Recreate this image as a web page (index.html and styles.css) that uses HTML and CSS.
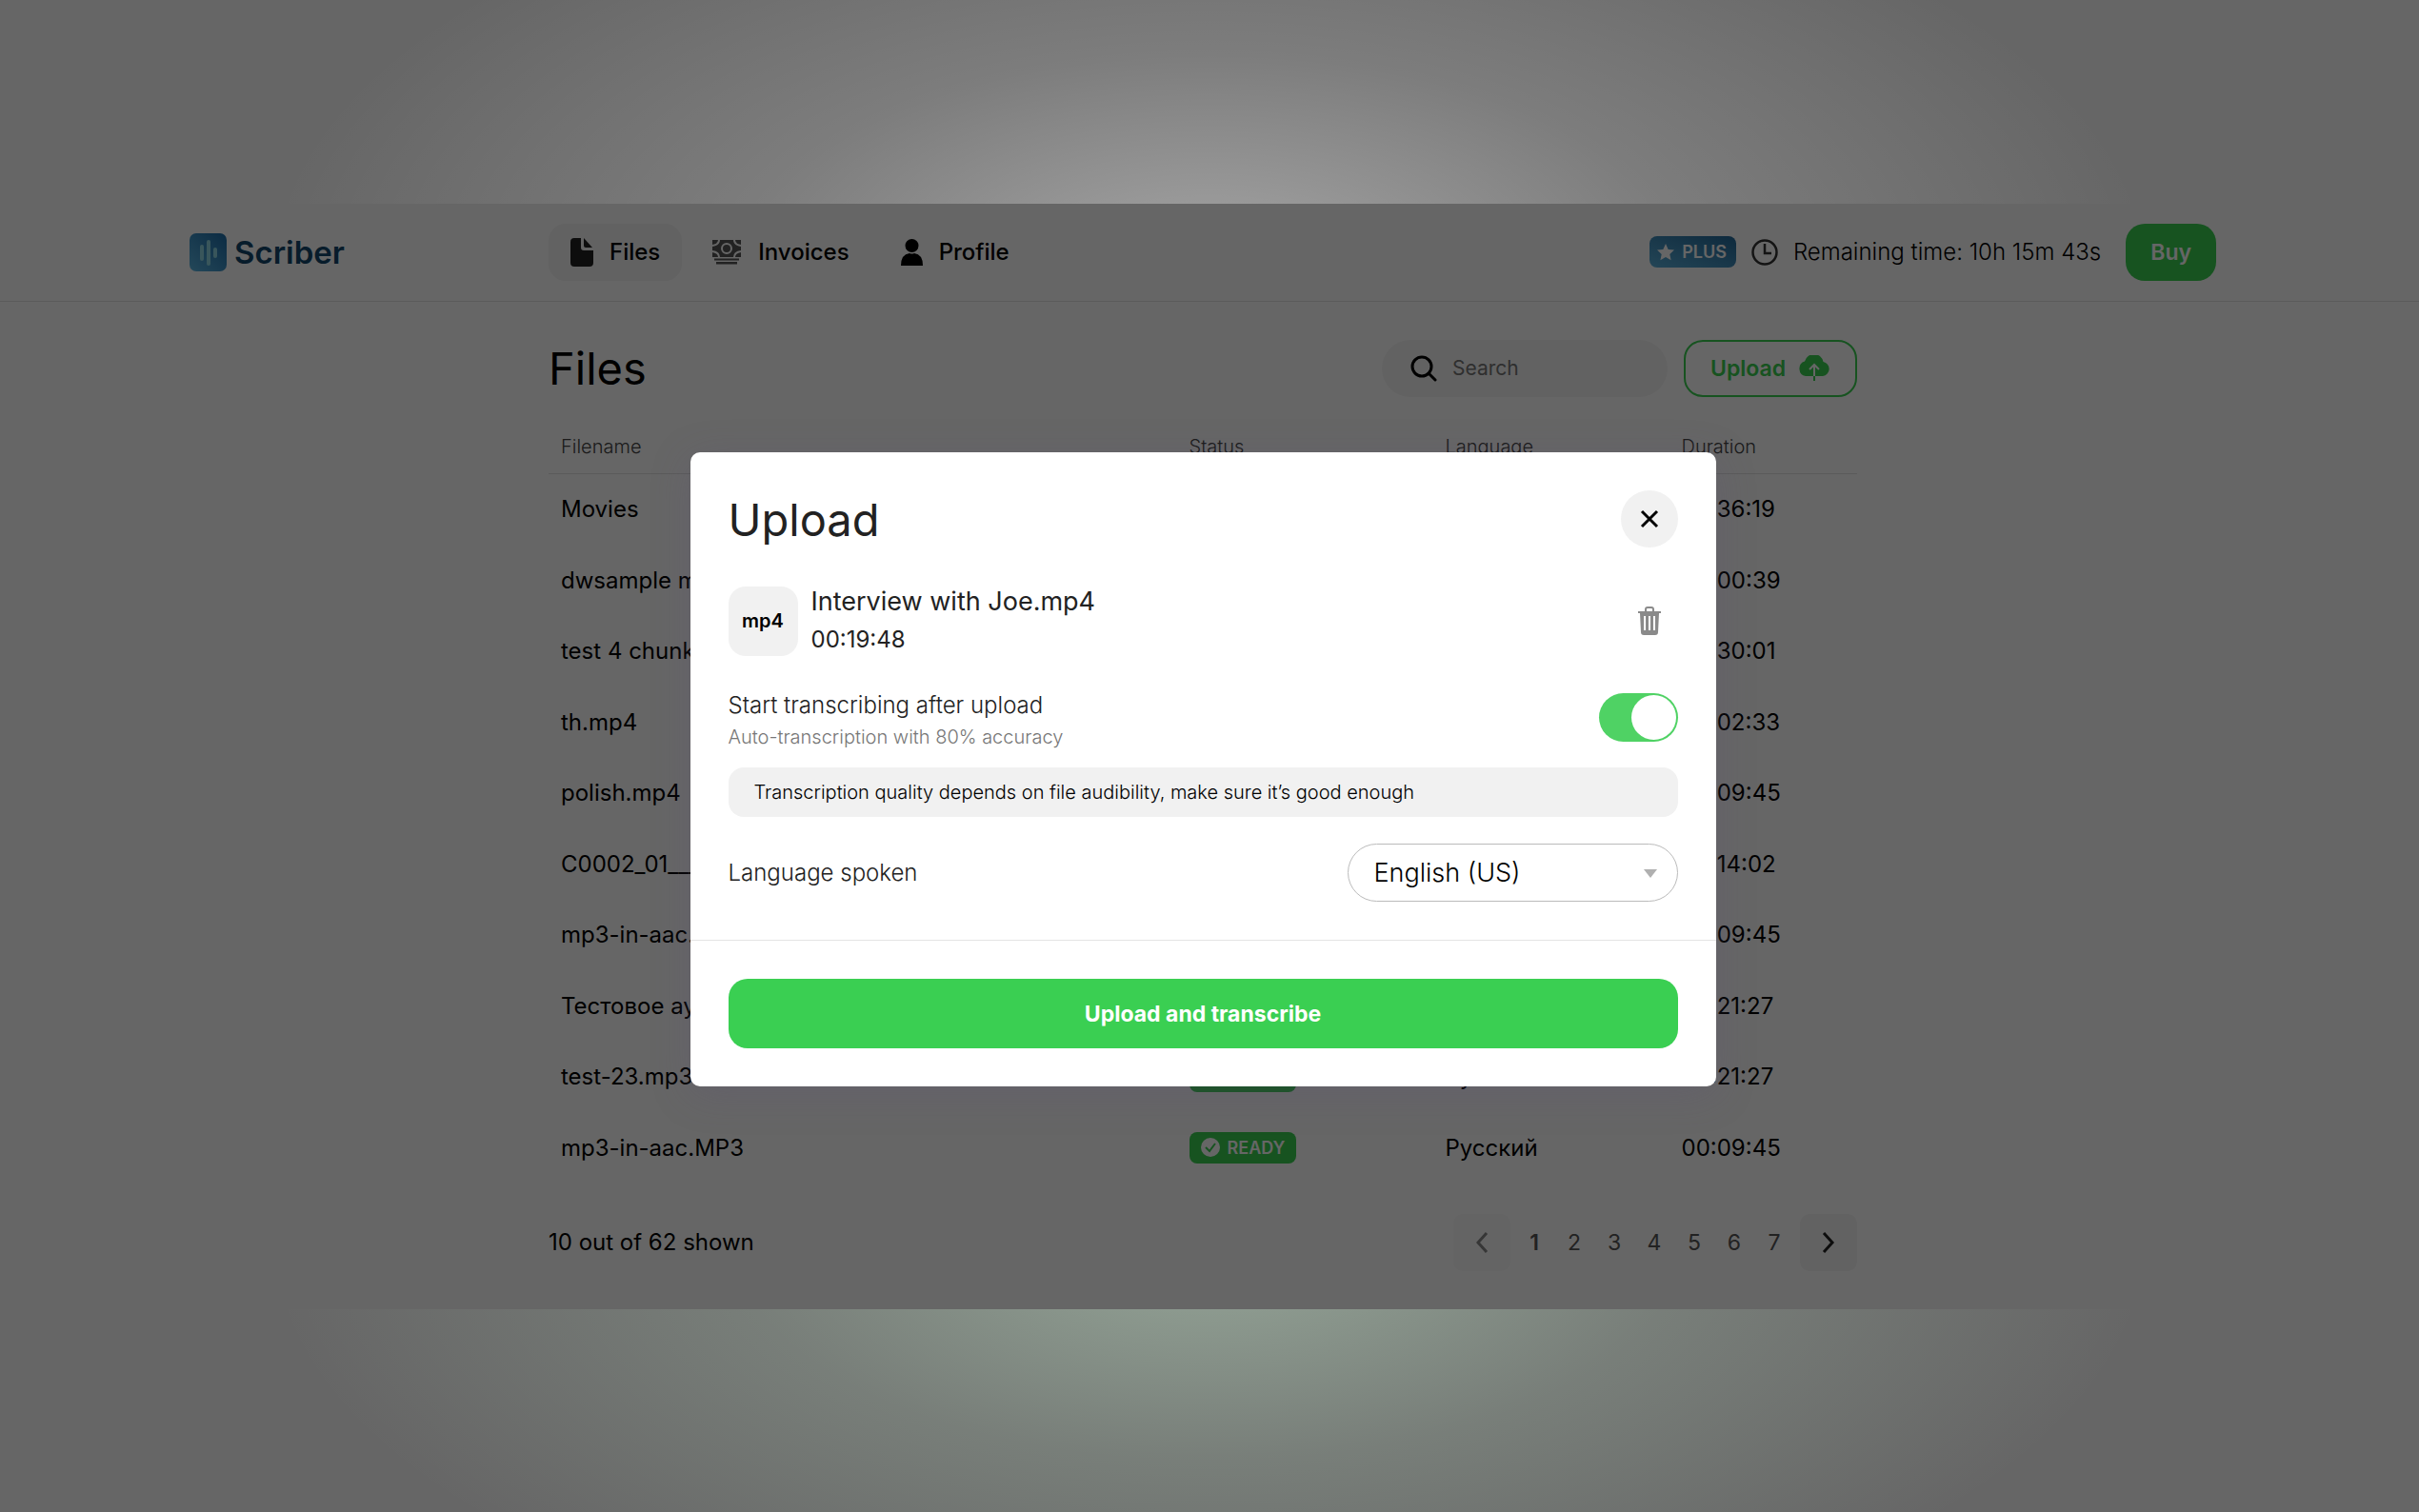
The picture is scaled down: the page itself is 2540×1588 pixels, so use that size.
FILE: index.html
```html
<!DOCTYPE html>
<html lang="en">
<head>
<meta charset="utf-8">
<title>Scriber - Files</title>
<link rel="stylesheet" href="styles.css">
</head>
<body>
<div class="app">
	<header class="header">
		<div class="header-inner">
			<a class="logo" href="#">
				<svg width="39" height="40" viewBox="0 0 39 40">
					<defs>
						<linearGradient id="logoFill" x1="0" y1="1" x2="1" y2="0">
							<stop offset="0" stop-color="#5ab4e0"/>
							<stop offset="1" stop-color="#1d6ba6"/>
						</linearGradient>
					</defs>
					<rect width="39" height="40" rx="7" fill="url(#logoFill)"/>
					<g stroke="#8fd8e4" stroke-width="4" stroke-linecap="round">
						<path d="M13 14v13M20 9v23M27 17v7"/>
					</g>
				</svg>
				<span>Scriber</span>
			</a>
			<nav class="nav">
				<a class="nav-item active" href="#files">
					<svg width="24" height="30" viewBox="0 0 24 30"><path fill="#222" d="M4 0h7v10q0 3 3 3h10v13q0 4-4 4H4q-4 0-4-4V4q0-4 4-4z"/><path fill="#222" d="M14 0l9 10h-7q-2 0-2-2z"/></svg>
					Files
				</a>
				<a class="nav-item" href="#invoices">
					<svg width="32" height="26" viewBox="0 0 32 26">
						<path fill="#555" d="M1 0h30v18H1z"/>
						<g fill="none" stroke="#fff" stroke-width="2">
							<circle cx="16" cy="9" r="5"/>
							<path d="M8 0q0 5-7 6M24 0q0 5 7 6M8 18q0-5-7-6M24 18q0-5 7-6"/>
						</g>
						<path fill="#555" d="M3 19.500h26v2H3zM5 23h22v2.500H5z"/>
					</svg>
					Invoices
				</a>
				<a class="nav-item" href="#profile">
					<svg width="23" height="28" viewBox="0 0 23 28"><ellipse cx="11.500" cy="7" rx="7" ry="7"/><path d="M0 28q0-12 9-13 2.500 1 5 0 9 1 9 13z"/></svg>
					Profile
				</a>
			</nav>
			<div class="account">
				<span class="plus">
					<svg width="18" height="18" viewBox="0 0 18 18"><path fill="#fff" d="M9 0l2.700 5.900 6.300.7-4.700 4.300 1.300 6.300L9 14l-5.600 3.200 1.300-6.300L0 6.600l6.300-.7z"/></svg>
					PLUS
				</span>
				<svg width="28" height="28" viewBox="0 0 28 28"><g fill="none" stroke="#333" stroke-width="2.500"><circle cx="14" cy="14" r="12.500"/><path d="M14 5v10h7"/></g></svg>
				<span class="remaining">Remaining time: 10h 15m 43s</span>
				<button class="btn btn-buy" type="button">Buy</button>
			</div>
		</div>
	</header>

	<main class="main">
		<div class="toolbar">
			<h1>Files</h1>
			<label class="search">
				<svg width="28" height="28" viewBox="0 0 28 28"><g fill="none" stroke="#000" stroke-width="3" stroke-linecap="round"><circle cx="12" cy="12" r="10"/><path d="M19 19l7 7"/></g></svg>
				<input type="text" placeholder="Search" aria-label="Search">
			</label>
			<button class="btn btn-outline" type="button">
				Upload
				<svg width="34" height="27" viewBox="0 0 34 27"><path fill="#3acf52" d="M8 22a8 8 0 0 1-1-15.500A10 10 0 0 1 26.500 7 7.600 7.600 0 0 1 26 22z"/><path fill="none" stroke="#fff" stroke-width="2" d="M17 22V11M12 15l5-5 5 5"/><path fill="none" stroke="#3acf52" stroke-width="2" d="M17 22v5"/></svg>
			</button>
		</div>

		<table class="files">
			<thead>
				<tr><th class="col-name">Filename</th><th class="col-status">Status</th><th class="col-lang">Language</th><th>Duration</th></tr>
			</thead>
			<tbody>
				<tr><td>Movies</td><td></td><td></td><td>00:36:19</td></tr>
				<tr><td>dwsample mp4.mp4</td><td></td><td></td><td>00:00:39</td></tr>
				<tr><td>test 4 chunks.mp4</td><td></td><td></td><td>00:30:01</td></tr>
				<tr><td>th.mp4</td><td></td><td></td><td>00:02:33</td></tr>
				<tr><td>polish.mp4</td><td></td><td></td><td>00:09:45</td></tr>
				<tr><td>C0002_01___.mp4</td><td></td><td></td><td>00:14:02</td></tr>
				<tr><td>mp3-in-aac.MP3</td><td></td><td></td><td>00:09:45</td></tr>
				<tr><td>Тестовое аудио</td><td></td><td></td><td>00:21:27</td></tr>
				<tr>
					<td>test-23.mp3</td>
					<td><span class="ready"><svg width="20" height="20" viewBox="0 0 20 20"><circle cx="10" cy="10" r="10" fill="#fff"/><path d="M5 10l4 4 6-8" fill="none" stroke="#3acf52" stroke-width="2"/></svg>READY</span></td>
					<td>Русский</td><td>00:21:27</td>
				</tr>
				<tr>
					<td>mp3-in-aac.MP3</td>
					<td><span class="ready"><svg width="20" height="20" viewBox="0 0 20 20"><circle cx="10" cy="10" r="10" fill="#fff"/><path d="M5 10l4 4 6-8" fill="none" stroke="#3acf52" stroke-width="2"/></svg>READY</span></td>
					<td>Русский</td><td>00:09:45</td>
				</tr>
			</tbody>
		</table>

		<div class="footer">
			<span>10 out of 62 shown</span>
			<nav class="pager" aria-label="Pages">
				<button class="page-btn" type="button" disabled aria-label="Previous"><svg width="14" height="24" viewBox="0 0 14 24"><path d="M12 2L3 12l9 10"/></svg></button>
				<a class="current" href="#1">1</a>
				<a href="#2">2</a>
				<a href="#3">3</a>
				<a href="#4">4</a>
				<a href="#5">5</a>
				<a href="#6">6</a>
				<a href="#7">7</a>
				<button class="page-btn" type="button" aria-label="Next"><svg width="14" height="24" viewBox="0 0 14 24"><path d="M2 2l9 10-9 10"/></svg></button>
			</nav>
		</div>
	</main>

	<div class="overlay">
		<div class="modal" role="dialog" aria-labelledby="uploadTitle">
			<div class="modal-body">
				<div class="modal-head">
					<h2 id="uploadTitle">Upload</h2>
					<button class="close" type="button" aria-label="Close"><svg width="20" height="20" viewBox="0 0 20 20"><path d="M2 2l16 16M18 2L2 18" stroke="#000" stroke-width="3"/></svg></button>
				</div>

				<div class="file">
					<span class="file-type">mp4</span>
					<div class="file-info">
						<div class="file-name">Interview with Joe.mp4</div>
						<div class="file-time">00:19:48</div>
					</div>
					<button class="trash" type="button" aria-label="Delete"><svg width="24" height="30" viewBox="0 0 24 30"><g fill="none" stroke="#8a8a8a"><path stroke-width="2" d="M8 5V3q0-2 2-2h4q2 0 2 2v2"/><path stroke-width="2" d="M0 6h24"/></g><path fill="#8a8a8a" fill-rule="evenodd" d="M2 7h20l-1 20q0 3-3 3H6q-3 0-3-3zM6 10v15h2V10zM11 10v15h2V10zM16 10v15h2V10z"/></svg></button>
				</div>

				<div class="option">
					<label for="start">
						<span class="option-title">Start transcribing after upload</span>
						<span class="option-hint">Auto-transcription with 80% accuracy</span>
					</label>
					<input class="toggle" id="start" type="checkbox" checked>
				</div>

				<p class="note">Transcription quality depends on file audibility, make sure it’s good enough</p>

				<div class="option">
					<label class="option-title" for="lang">Language spoken</label>
					<div class="select">
						<select id="lang">
							<option>English (US)</option>
						</select>
						<svg width="14" height="9" viewBox="0 0 14 9"><path d="M0 0h14L7 9z" fill="#b0b0b0"/></svg>
					</div>
				</div>
			</div>
			<div class="modal-foot">
				<button class="btn btn-submit" type="button">Upload and transcribe</button>
			</div>
		</div>
	</div>
</div>
</body>
</html>
```
FILE: styles.css
```css
* {
	box-sizing: border-box;
}

body {
	margin: 0;
	min-height: 100vh;
	display: flex;
	flex-direction: column;
	justify-content: center;
	font-family: Inter, "Liberation Sans", sans-serif;
	font-size: 24px;
	color: #000;
	background:
		radial-gradient(ellipse 39% 29% at 50% 18%, rgba(255, 255, 255, .42), rgba(255, 255, 255, .15) 50%, transparent),
		radial-gradient(ellipse 39% 29% at 50% 82%, rgba(215, 255, 222, .42), rgba(215, 255, 222, .16) 50%, transparent),
		#666;
}

h1, h2, p {
	margin: 0;
}

a {
	color: inherit;
	text-decoration: none;
}

svg {
	flex: none;
	display: block;
}

button, input, select {
	font: inherit;
}

button {
	border: 0;
	padding: 0;
	cursor: pointer;
}

.app {
	position: relative;
	background: #fff;
}

/* header */
.header {
	border-bottom: 1px solid #e4e4e4;
	padding-right: 14px;
}

.header-inner {
	display: flex;
	align-items: center;
	height: 102px;
	width: calc(100% - 398px);
	margin: 0 auto;
}

.logo {
	display: flex;
	align-items: center;
	gap: 8px;
	flex: 0 0 377px;
	font-size: 33px;
	font-weight: 600;
	color: #13476b;
}

.nav {
	display: flex;
	gap: 8px;
	font-weight: 500;
}

.nav-item {
	display: flex;
	align-items: center;
	gap: 17px;
	height: 60px;
	padding: 0 23px;
	border-radius: 18px;
}

.nav-item.active {
	background: #f5f5f5;
}

.account {
	display: flex;
	align-items: center;
	gap: 16px;
	margin-left: auto;
}

.remaining {
	font-weight: 300;
}

.plus {
	display: flex;
	align-items: center;
	gap: 8px;
	height: 33px;
	padding: 0 10px 0 8px;
	border-radius: 8px;
	color: #fff;
	font-size: 18px;
	font-weight: 600;
	background: linear-gradient(20deg, #5aaed8, #236898);
}

.btn {
	border-radius: 20px;
	font-size: 23px;
	font-weight: 600;
	color: #fff;
	background: #3acf52;
}

.btn-buy {
	height: 60px;
	padding: 0 26px;
	margin-left: 10px;
}

.btn-outline {
	display: flex;
	align-items: center;
	justify-content: space-between;
	width: 182px;
	height: 60px;
	padding: 0 26px;
	border: 2px solid #3acf52;
	color: #3acf52;
	background: none;
}

/* file list */
.main {
	padding: 40px 14px 40px 0;
}

.toolbar, .files, .footer {
	width: calc(100% - 24px);
	max-width: 1374px;
	margin: 0 auto;
}

.toolbar {
	display: flex;
	align-items: center;
}

.toolbar h1 {
	flex: 1;
	font-size: 47px;
	font-weight: 400;
}

.search {
	display: flex;
	align-items: center;
	gap: 16px;
	width: 300px;
	height: 60px;
	padding: 0 30px;
	margin-right: 17px;
	border-radius: 30px;
	background: #f5f5f5;
}

.search input {
	width: 100%;
	padding: 0;
	border: 0;
	outline: 0;
	font-size: 21px;
	background: none;
}

.search input::placeholder {
	color: #757575;
}

.files {
	table-layout: fixed;
	border-collapse: collapse;
	text-align: left;
}

.files th {
	height: 81px;
	padding: 24px 13px 0;
	border-bottom: 1px solid #e4e4e4;
	font-size: 20px;
	font-weight: 300;
	color: #444;
}

.files td {
	height: 74px;
	padding: 0 13px;
	white-space: nowrap;
}

.files tr:nth-child(even) td {
	height: 75px;
}

.col-name {
	width: 48%;
}

.col-status {
	width: 269px;
}

.col-lang {
	width: 248px;
}

.ready {
	display: inline-flex;
	align-items: center;
	gap: 8px;
	height: 33px;
	padding: 0 12px;
	border-radius: 8px;
	font-size: 18px;
	font-weight: 600;
	color: #fff;
	background: #3acf52;
	vertical-align: middle;
}

.footer {
	display: flex;
	align-items: center;
	justify-content: space-between;
	margin-top: 32px;
}

.pager {
	display: flex;
	align-items: center;
}

.pager a {
	width: 42px;
	text-align: center;
	font-size: 23px;
	color: #555;
}

.pager .current {
	font-weight: 600;
}

.page-btn {
	display: flex;
	align-items: center;
	justify-content: center;
	width: 60px;
	height: 60px;
	border-radius: 10px;
	background: #f5f5f5;
}

.page-btn path {
	fill: none;
	stroke: #222;
	stroke-width: 3;
}

.page-btn:first-child {
	margin-right: 4px;
}

.page-btn:last-child {
	margin-left: 6px;
}

.page-btn:disabled {
	background: #fafafa;
}

.page-btn:disabled path {
	stroke: #888;
}

/* upload dialog */
.overlay {
	position: absolute;
	inset: 0;
	display: flex;
	align-items: center;
	justify-content: center;
	padding: 28px 14px 0 0;
	background: rgba(0, 0, 0, .6);
}

.modal {
	width: 90%;
	max-width: 1077px;
	border-radius: 10px;
	background: #fff;
	box-shadow: 0 8px 40px rgba(90, 80, 120, .25);
}

.modal-body {
	padding: 40px;
	border-bottom: 1px solid #e4e4e4;
}

.modal-head {
	display: flex;
	align-items: center;
	justify-content: space-between;
	margin-bottom: 37px;
}

.modal-head h2 {
	font-size: 47px;
	font-weight: 400;
	color: #222;
}

.close {
	display: flex;
	align-items: center;
	justify-content: center;
	width: 60px;
	height: 60px;
	border-radius: 50%;
	background: #f1f1f1;
}

.file {
	display: flex;
	align-items: center;
	gap: 14px;
	margin-bottom: 32px;
}

.file-type {
	width: 73px;
	border-radius: 18px;
	background: #f1f1f1;
	font-size: 20px;
	font-weight: 600;
	line-height: 73px;
	text-align: center;
}

.file-info {
	flex: 1;
	line-height: 40px;
	color: #222;
}

.file-name {
	font-size: 27px;
}

.trash {
	padding: 0 18px;
	background: none;
}

.option {
	display: flex;
	align-items: center;
	justify-content: space-between;
}

.option-title {
	display: block;
	font-weight: 300;
	line-height: 34px;
	color: #222;
}

.option-hint {
	display: block;
	font-size: 20px;
	font-weight: 300;
	line-height: 32px;
	color: #777;
}

.toggle {
	appearance: none;
	display: flex;
	justify-content: flex-end;
	width: 83px;
	height: 51px;
	margin: 0 0 8px;
	padding: 2px;
	border-radius: 26px;
	background: #4fd264;
}

.toggle::before {
	content: "";
	width: 47px;
	border-radius: 50%;
	background: #fff;
}

.note {
	margin: 16px 0 28px;
	padding: 0 27px;
	border-radius: 16px;
	background: #f1f1f1;
	font-size: 20px;
	font-weight: 300;
	line-height: 52px;
}

.select {
	position: relative;
	width: 347px;
}

.select select {
	appearance: none;
	width: 100%;
	height: 61px;
	padding: 0 27px;
	border: 1px solid #bbb;
	border-radius: 31px;
	background: #fff;
	font-size: 27px;
	font-weight: 300;
	color: #000;
}

.select svg {
	position: absolute;
	right: 22px;
	top: 27px;
	pointer-events: none;
}

.modal-foot {
	padding: 40px;
}

.btn-submit {
	width: 100%;
	height: 73px;
	font-weight: 700;
}
```
